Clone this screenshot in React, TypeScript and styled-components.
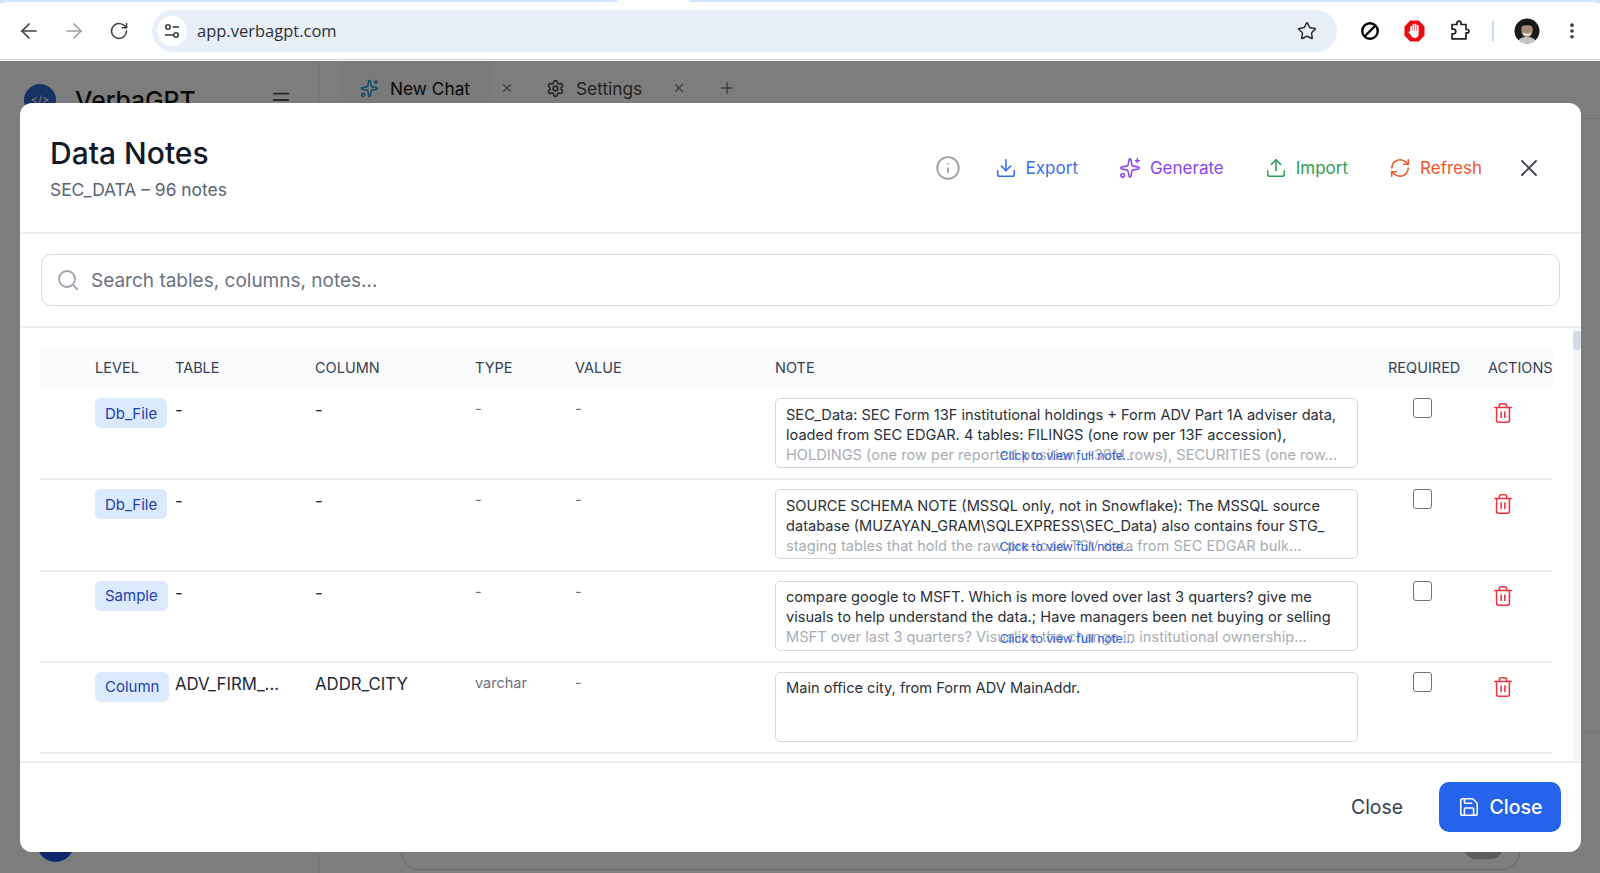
import React from "react";
import styled, { createGlobalStyle } from "styled-components";
import {
  ArrowLeft,
  ArrowRight,
  Download,
  EllipsisVertical,
  Info,
  Menu,
  Plus,
  RefreshCw,
  RotateCw,
  Save,
  Search,
  Settings,
  Sparkles,
  Star,
  Trash2,
  Upload,
  X,
} from "lucide-react";

const UI_FONT = `Inter, "Liberation Sans", sans-serif`;
const GRID = "55px 80px 140px 160px 100px 200px 613px 100px 65px";

const GlobalStyle = createGlobalStyle`
  html, body {
    margin: 0;
    padding: 0;
    height: 873px;
    overflow: hidden;
    background: #fff;
    font-family: ${UI_FONT};
  }
  * { box-sizing: border-box; }
`;

const Page = styled.div`
  position: relative;
  width: 1600px;
  height: 873px;
  overflow: hidden;
  display: flex;
  flex-direction: column;
`;

/* browser chrome */
const TabStrip = styled.div`
  height: 3px;
  background: #d3e3fd;
  display: flex;
  padding-left: 617px;
`;
const StripTab = styled.div`
  width: 72px;
  background: #fff;
`;
const Toolbar = styled.div`
  height: 58px;
  background: #fff;
  border-top-left-radius: 8px;
  border-top-right-radius: 8px;
  border-bottom: 1px solid #d8d8d8;
  margin-top: -1px;
  padding: 0 6px;
  display: flex;
  align-items: center;
  color: #3c4043;
`;
const Slot = styled.div<{ $muted?: boolean }>`
  width: 45px;
  height: 40px;
  flex: none;
  display: flex;
  align-items: center;
  justify-content: center;
  color: ${(p) => (p.$muted ? "#9aa0a6" : "#3c4043")};
`;
const Omnibox = styled.div`
  flex: 1;
  height: 42px;
  margin: 0 10px 0 11px;
  border-radius: 21px;
  background: #e9eff9;
  display: flex;
  align-items: center;
  padding: 0 20px 0 5px;
`;
const SiteButton = styled.div`
  width: 30px;
  height: 30px;
  border-radius: 50%;
  background: #fff;
  display: flex;
  align-items: center;
  justify-content: center;
`;
const Url = styled.div`
  flex: 1;
  margin-left: 10px;
  font: 400 16.5px "Open Sans", sans-serif;
  color: #2c2f33;
`;
const ToolbarDivider = styled.div`
  width: 2px;
  height: 20px;
  margin: 0 10px;
  background: #c9daf5;
`;

/* app behind the dialog */
const Shell = styled.div`
  flex: 1;
  display: flex;
  background: #fbfbfb;
  min-height: 0;
`;
const Sidebar = styled.aside`
  width: 320px;
  flex: none;
  border-right: 1px solid #ececec;
  padding: 24px 24px 11px;
  display: flex;
  flex-direction: column;
  justify-content: space-between;
`;
const Brand = styled.div`
  display: flex;
  align-items: center;
`;
const LogoCircle = styled.div`
  width: 32px;
  height: 32px;
  border-radius: 50%;
  background: #2c62c8;
  display: flex;
  align-items: center;
  justify-content: center;
  color: #fff;
  font-size: 11px;
`;
const BrandName = styled.div`
  margin-left: 19px;
  width: 195px;
  font-size: 24.7px;
  font-weight: 500;
  color: #111;
`;
const SideAvatar = styled.div`
  width: 37px;
  height: 37px;
  margin-left: 13px;
  border-radius: 50%;
  background: #1d4ed8;
`;
const Workspace = styled.main`
  flex: 1;
  display: flex;
  flex-direction: column;
`;
const TabRow = styled.div`
  height: 59px;
  display: flex;
  align-items: center;
  border-bottom: 1px solid #e5e5e5;
  padding-left: 18px;
`;
const AppTab = styled.div<{ $active?: boolean }>`
  height: 100%;
  display: flex;
  align-items: center;
  gap: 11px;
  padding: 0 20px 2px 22px;
  background: ${(p) => (p.$active ? "#f5f5f5" : "transparent")};
  font-size: 17.3px;
  color: ${(p) => (p.$active ? "#111" : "#444")};
`;
const TabClose = styled.span`
  display: flex;
  margin: 0 10px;
  padding-bottom: 2px;
  color: #777;
`;
const NewTab = styled.span`
  display: flex;
  margin-left: 22px;
  padding-bottom: 2px;
  color: #777;
`;
const AppBody = styled.div`
  height: 614px;
  border-bottom: 1px solid #e5e5e5;
`;
const Composer = styled.div`
  flex: 1;
  display: flex;
  align-items: flex-end;
  padding: 0 80px 3px 81px;
`;
const ComposerBox = styled.div`
  width: 100%;
  height: 80px;
  border: 1px solid #ccc;
  border-radius: 18px;
  display: flex;
  align-items: flex-end;
  justify-content: flex-end;
  padding: 0 17px 10px;
`;
const SendButton = styled.div`
  width: 37px;
  height: 30px;
  border-radius: 10px;
  background: #bbb;
`;

const Overlay = styled.div`
  position: absolute;
  left: 0;
  right: 0;
  top: 61px;
  bottom: 0;
  background: rgba(0, 0, 0, 0.5);
`;

/* dialog */
const Modal = styled.section`
  position: absolute;
  left: 20px;
  top: 103px;
  width: 1561px;
  height: 749px;
  background: #fff;
  border-radius: 12px;
  overflow: hidden;
  display: flex;
  flex-direction: column;
`;
const ModalHeader = styled.header`
  height: 131px;
  flex: none;
  border-bottom: 2px solid #edeef0;
  padding: 30px 38px 0 30px;
  display: flex;
  align-items: flex-start;
  justify-content: space-between;
`;
const Title = styled.h1`
  margin: 0;
  font-size: 30px;
  line-height: 40px;
  font-weight: 500;
  color: #111827;
`;
const Subtitle = styled.div`
  margin-top: 6px;
  font-size: 17.4px;
  line-height: 22px;
  color: #5b6370;
`;
const HeaderActions = styled.div`
  height: 70px;
  display: flex;
  align-items: center;
`;
const InfoButton = styled.span`
  display: flex;
  margin-right: 34px;
  color: #9a9da3;
`;
const ActionButton = styled.button<{ $color: string }>`
  display: flex;
  align-items: center;
  gap: 9px;
  margin: 0 41px 0 0;
  padding: 0;
  border: 0;
  background: none;
  font: 400 17px ${UI_FONT};
  color: ${(p) => p.$color};
`;
const CloseIcon = styled.span`
  display: flex;
  margin-left: -8px;
  color: #3f4650;
`;

const SearchSection = styled.div`
  height: 94px;
  flex: none;
  padding: 20px 21px 0;
  border-bottom: 2px solid #edeef0;
`;
const SearchBox = styled.div`
  height: 52px;
  border: 1.5px solid #d9dbdf;
  border-radius: 10px;
  display: flex;
  align-items: center;
  padding-left: 14px;
  gap: 11px;
  color: #9ca3af;
`;
const SearchText = styled.div`
  font-size: 19px;
  color: #6b7280;
`;

const ScrollArea = styled.div`
  flex: 1;
  min-height: 0;
  display: flex;
`;
const TableWrap = styled.div`
  flex: 1;
  overflow: hidden;
  padding: 20px 20px 0;
`;
const HeaderRow = styled.div`
  height: 40px;
  margin-bottom: 1px;
  padding-bottom: 2px;
  display: grid;
  grid-template-columns: ${GRID};
  align-items: center;
  background: #f9fafb;
  font-size: 14.5px;
  color: #374151;
`;
const Row = styled.div`
  height: 91.33px;
  display: grid;
  grid-template-columns: ${GRID};
  align-items: start;
  padding-top: 9px;
  border-bottom: 2px solid #eeeff1;
`;
const Badge = styled.span`
  display: inline-flex;
  align-items: center;
  height: 30px;
  padding: 0 10px;
  margin-right: -6px;
  border-radius: 6px;
  background: #dbeafe;
  font-size: 15px;
  color: #1e40af;
`;
const NameCell = styled.div`
  padding-top: 2px;
  font-size: 16.8px;
  line-height: 20px;
  color: #1f2937;
`;
const DimCell = styled.div`
  padding-top: 1px;
  font-size: 14.5px;
  line-height: 20px;
  color: #6b7280;
`;
const NoteBox = styled.div`
  position: relative;
  width: 583px;
  height: 70px;
  border: 1.5px solid #d5d7db;
  border-radius: 5px;
  padding: 5.5px 10px;
`;
const NoteLine = styled.div<{ $faded?: boolean }>`
  font-size: 14.6px;
  line-height: 20px;
  white-space: nowrap;
  overflow: hidden;
  color: ${(p) => (p.$faded ? "#a9adb3" : "#2a2f38")};
`;
const ViewFull = styled.span`
  position: absolute;
  left: 0;
  right: 0;
  bottom: 1px;
  text-align: center;
  font-size: 12.2px;
  line-height: 20px;
  color: #2f5fdc;
`;
const RequiredCell = styled.div`
  padding-left: 25px;
`;
const Checkbox = styled.div`
  width: 19px;
  height: 20px;
  border: 1.5px solid #6b7280;
  border-radius: 3px;
  background: #fff;
`;
const ActionCell = styled.div`
  padding: 4px 0 0 4px;
  color: #ef3340;
`;
const ScrollTrack = styled.div`
  width: 8px;
  flex: none;
  background: #f3f5f8;
  padding-top: 3px;
`;
const ScrollThumb = styled.div`
  height: 19px;
  border-radius: 3px;
  background: #d3dbe6;
`;

const ModalFooter = styled.footer`
  height: 91px;
  flex: none;
  border-top: 2px solid #edeef0;
  padding: 0 20px 1px 0;
  display: flex;
  align-items: center;
  justify-content: flex-end;
  gap: 36px;
`;
const GhostButton = styled.button`
  padding: 0;
  border: 0;
  background: none;
  font: 400 19.4px ${UI_FONT};
  color: #374151;
`;
const PrimaryButton = styled.button`
  width: 122px;
  height: 50px;
  border: 0;
  border-radius: 10px;
  background: #2563eb;
  display: flex;
  align-items: center;
  justify-content: center;
  gap: 10px;
  font: 500 19.5px ${UI_FONT};
  color: #fff;
`;

const TuneIcon = () => (
  <svg width="18" height="18" viewBox="0 0 18 18" fill="none" stroke="#3c4043" strokeWidth="1.6">
    <circle cx="5" cy="5" r="2.2" />
    <path d="M9.5 5H16" />
    <circle cx="13" cy="13" r="2.2" />
    <path d="M2 13h8.5" />
  </svg>
);

const BanIcon = () => (
  <svg width="20" height="20" viewBox="0 0 20 20" fill="none" stroke="#000" strokeWidth="2.4">
    <circle cx="10" cy="10" r="7.8" />
    <path d="M15.5 4.5 4.5 15.5" />
  </svg>
);

const StopIcon = () => (
  <svg width="21" height="22" viewBox="0 0 21 22">
    <polygon points="6.2,0.5 14.8,0.5 20.5,6.5 20.5,15.5 14.8,21.5 6.2,21.5 0.5,15.5 0.5,6.5" fill="#ec0a12" />
    <g fill="#fff">
      <rect x="6.2" y="6" width="1.8" height="7" rx="0.9" />
      <rect x="8.4" y="4" width="1.8" height="8" rx="0.9" />
      <rect x="10.6" y="3.6" width="1.8" height="8" rx="0.9" />
      <rect x="12.8" y="5" width="1.8" height="8" rx="0.9" />
      <path d="M6.2 11h8.4v3.2c0 2.2-1.6 3.8-3.8 3.8-1.6 0-2.7-.8-3.4-2.2L4.6 12.6c-.4-.8.6-1.5 1.2-.9z" />
    </g>
  </svg>
);

const PuzzleIcon = () => (
  <svg width="22" height="22" viewBox="0 0 22 22" fill="none" stroke="#222" strokeWidth="1.7" strokeLinejoin="round">
    <path d="M3 4.500h5V3.200a2 2 0 0 1 4 0v1.300h5v5h1.300a1.700 1.700 0 0 1 0 3.400H17v6H3v-5h1.400a2.400 2.400 0 0 0 0-4.800H3z" />
  </svg>
);

const AvatarIcon = () => (
  <svg width="26" height="26" viewBox="0 0 26 26">
    <circle cx="13" cy="13" r="12.500" fill="#1b1b1b" />
    <ellipse cx="13" cy="12" rx="5.800" ry="7.600" fill="#a58a7a" />
    <path d="M8.600 14.200c2.600 2 6.200 2 8.800 0-.6 2.600-2.400 3.600-4.400 3.600s-3.800-1-4.400-3.600z" fill="#f4f0ec" />
    <path d="M7.400 8.400c.6-4 3-5 5.600-5s5 1 5.600 5c-2-1.600-9.200-1.600-11.200 0z" fill="#111" />
    <path d="M4.500 22.500c2-3 5-3.500 8.500-3.500s6.500.5 8.500 3.500A12.500 12.500 0 0 1 13 25.500a12.500 12.500 0 0 1-8.500-3z" fill="#c4c4c4" />
  </svg>
);

const columns = ["", "LEVEL", "TABLE", "COLUMN", "TYPE", "VALUE", "NOTE", "REQUIRED", "ACTIONS"];

const notes = [
  {
    level: "Db_File",
    table: "-",
    column: "-",
    type: "-",
    lines: [
      "SEC_Data: SEC Form 13F institutional holdings + Form ADV Part 1A adviser data,",
      "loaded from SEC EDGAR. 4 tables: FILINGS (one row per 13F accession),",
      "HOLDINGS (one row per reported position, ~30M rows), SECURITIES (one row...",
    ],
  },
  {
    level: "Db_File",
    table: "-",
    column: "-",
    type: "-",
    lines: [
      "SOURCE SCHEMA NOTE (MSSQL only, not in Snowflake): The MSSQL source",
      "database (MUZAYAN_GRAM\\SQLEXPRESS\\SEC_Data) also contains four STG_",
      "staging tables that hold the raw pre-load TSV data from SEC EDGAR bulk...",
    ],
  },
  {
    level: "Sample",
    table: "-",
    column: "-",
    type: "-",
    lines: [
      "compare google to MSFT. Which is more loved over last 3 quarters? give me",
      "visuals to help understand the data.; Have managers been net buying or selling",
      "MSFT over last 3 quarters? Visualize the change in institutional ownership...",
    ],
  },
  {
    level: "Column",
    table: "ADV_FIRM_...",
    column: "ADDR_CITY",
    type: "varchar",
    lines: ["Main office city, from Form ADV MainAddr."],
  },
];

const actions = [
  { label: "Export", color: "#3b6cf0", Icon: Download },
  { label: "Generate", color: "#8b45ec", Icon: Sparkles },
  { label: "Import", color: "#2f9e55", Icon: Upload },
  { label: "Refresh", color: "#f0552a", Icon: RefreshCw },
];

export default function App() {
  return (
    <Page>
      <GlobalStyle />
      <TabStrip>
        <StripTab />
      </TabStrip>
      <Toolbar>
        <Slot><ArrowLeft size={24} strokeWidth={1.7} /></Slot>
        <Slot $muted><ArrowRight size={24} strokeWidth={1.7} /></Slot>
        <Slot><RotateCw size={20} strokeWidth={1.9} /></Slot>
        <Omnibox>
          <SiteButton><TuneIcon /></SiteButton>
          <Url>app.verbagpt.com</Url>
          <Star size={20} strokeWidth={1.8} color="#2c2f33" />
        </Omnibox>
        <Slot><BanIcon /></Slot>
        <Slot><StopIcon /></Slot>
        <Slot><PuzzleIcon /></Slot>
        <ToolbarDivider />
        <Slot><AvatarIcon /></Slot>
        <Slot><EllipsisVertical size={20} strokeWidth={2.4} /></Slot>
      </Toolbar>

      <Shell>
        <Sidebar>
          <Brand>
            <LogoCircle>&lt;/&gt;</LogoCircle>
            <BrandName>VerbaGPT</BrandName>
            <Menu size={22} color="#555" />
          </Brand>
          <SideAvatar />
        </Sidebar>
        <Workspace>
          <TabRow>
            <AppTab $active>
              <Sparkles size={19} color="#2b9ad8" />
              New Chat
            </AppTab>
            <TabClose><X size={14} /></TabClose>
            <AppTab>
              <Settings size={19} />
              Settings
            </AppTab>
            <TabClose><X size={14} /></TabClose>
            <NewTab><Plus size={18} /></NewTab>
          </TabRow>
          <AppBody />
          <Composer>
            <ComposerBox>
              <SendButton />
            </ComposerBox>
          </Composer>
        </Workspace>
      </Shell>

      <Overlay />

      <Modal>
        <ModalHeader>
          <div>
            <Title>Data Notes</Title>
            <Subtitle>SEC_DATA – 96 notes</Subtitle>
          </div>
          <HeaderActions>
            <InfoButton><Info size={26} strokeWidth={1.6} /></InfoButton>
            {actions.map(({ label, color, Icon }) => (
              <ActionButton key={label} $color={color}>
                <Icon size={22} strokeWidth={1.7} />
                {label}
              </ActionButton>
            ))}
            <CloseIcon><X size={28} strokeWidth={1.6} /></CloseIcon>
          </HeaderActions>
        </ModalHeader>

        <SearchSection>
          <SearchBox>
            <Search size={24} strokeWidth={1.8} />
            <SearchText>Search tables, columns, notes...</SearchText>
          </SearchBox>
        </SearchSection>

        <ScrollArea>
          <TableWrap>
            <HeaderRow>
              {columns.map((label, i) => (
                <div key={i}>{label}</div>
              ))}
            </HeaderRow>
            {notes.map((n, i) => (
              <Row key={i}>
                <div />
                <div><Badge>{n.level}</Badge></div>
                <NameCell>{n.table}</NameCell>
                <NameCell>{n.column}</NameCell>
                <DimCell>{n.type}</DimCell>
                <DimCell>-</DimCell>
                <NoteBox>
                  {n.lines.map((line, j) => (
                    <NoteLine key={j} $faded={j === 2}>{line}</NoteLine>
                  ))}
                  {n.lines.length > 1 && <ViewFull>Click to view full note...</ViewFull>}
                </NoteBox>
                <RequiredCell><Checkbox /></RequiredCell>
                <ActionCell><Trash2 size={22} strokeWidth={1.7} /></ActionCell>
              </Row>
            ))}
          </TableWrap>
          <ScrollTrack>
            <ScrollThumb />
          </ScrollTrack>
        </ScrollArea>

        <ModalFooter>
          <GhostButton>Close</GhostButton>
          <PrimaryButton>
            <Save size={22} strokeWidth={1.7} />
            Close
          </PrimaryButton>
        </ModalFooter>
      </Modal>
    </Page>
  );
}
